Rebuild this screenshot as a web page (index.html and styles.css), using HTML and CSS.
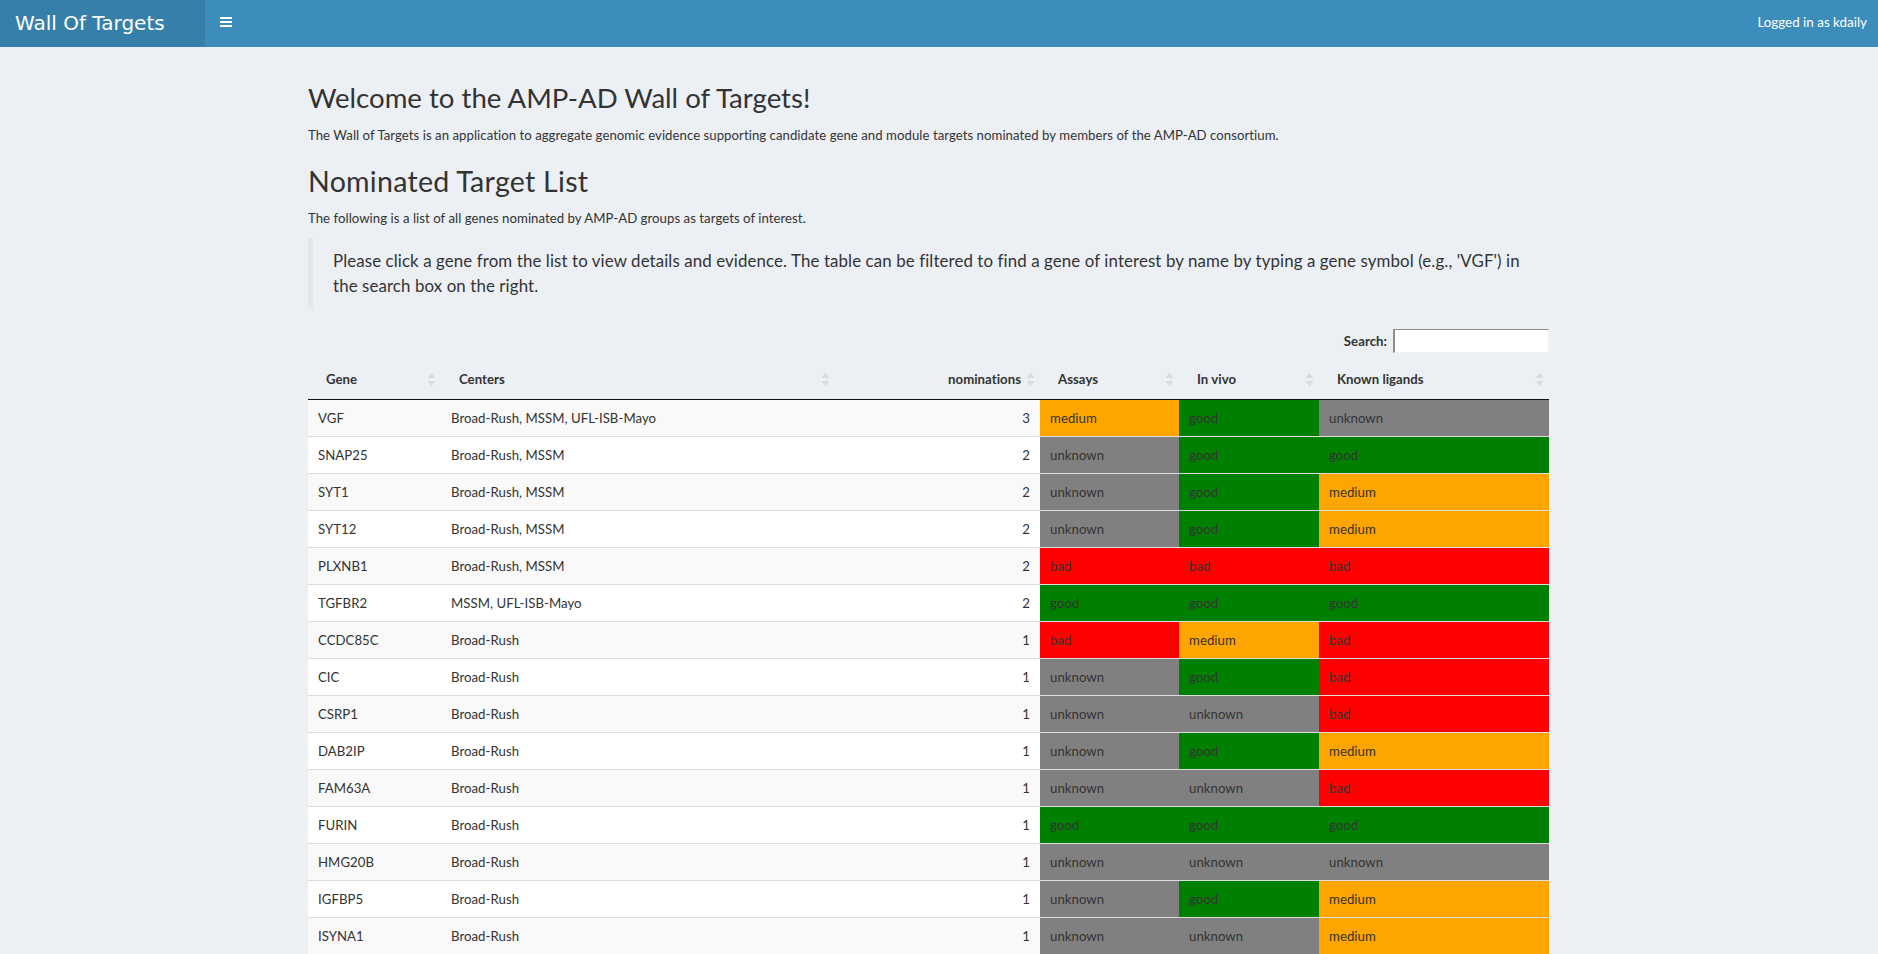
FILE: index.html
```html
<!DOCTYPE html>
<html>
<head>
<meta charset="utf-8">
<title>Wall Of Targets</title>
<link rel="stylesheet" href="styles.css">
</head>
<body>
<header class="main-header">
  <div class="logo">Wall Of Targets</div>
  <nav class="navbar">
    <span class="toggle">
      <svg width="12" height="10" viewBox="0 0 12 10"><rect x="0" y="0" width="12" height="2" fill="#fff"/><rect x="0" y="4" width="12" height="2" fill="#fff"/><rect x="0" y="8" width="12" height="2" fill="#fff"/></svg>
    </span>
    <span class="user">Logged in as kdaily</span>
  </nav>
</header>
<main class="content">
  <div class="col">
    <h1>Welcome to the AMP-AD Wall of Targets!</h1>
    <p>The Wall of Targets is an application to aggregate genomic evidence supporting candidate gene and module targets nominated by members of the AMP-AD consortium.</p>
    <h2>Nominated Target List</h2>
    <p>The following is a list of all genes nominated by AMP-AD groups as targets of interest.</p>
    <blockquote>Please click a gene from the list to view details and evidence. The table can be filtered to find a gene of interest by name by typing a gene symbol (e.g., 'VGF') in the search box on the right.</blockquote>
    <div class="filter"><label>Search:</label><input type="search" class="search"></div>
    <table class="dt">
      <colgroup><col class="c-gene"><col class="c-centers"><col class="c-nom"><col class="c-assay"><col class="c-vivo"><col class="c-lig"></colgroup>
      <thead>
        <tr>
          <th>Gene<span class="sort"><svg width="9" height="15" viewBox="0 0 9 15"><polygon points="0.5,6 4.5,1 8.5,6" fill="#dadada"/><polygon points="0.5,9 8.5,9 4.5,14" fill="#dadada"/></svg></span></th>
          <th>Centers<span class="sort"><svg width="9" height="15" viewBox="0 0 9 15"><polygon points="0.5,6 4.5,1 8.5,6" fill="#dadada"/><polygon points="0.5,9 8.5,9 4.5,14" fill="#dadada"/></svg></span></th>
          <th class="right">nominations<span class="sort"><svg width="9" height="15" viewBox="0 0 9 15"><polygon points="0.5,6 4.5,1 8.5,6" fill="#dadada"/><polygon points="0.5,9 8.5,9 4.5,14" fill="#dadada"/></svg></span></th>
          <th>Assays<span class="sort"><svg width="9" height="15" viewBox="0 0 9 15"><polygon points="0.5,6 4.5,1 8.5,6" fill="#dadada"/><polygon points="0.5,9 8.5,9 4.5,14" fill="#dadada"/></svg></span></th>
          <th>In vivo<span class="sort"><svg width="9" height="15" viewBox="0 0 9 15"><polygon points="0.5,6 4.5,1 8.5,6" fill="#dadada"/><polygon points="0.5,9 8.5,9 4.5,14" fill="#dadada"/></svg></span></th>
          <th>Known ligands<span class="sort"><svg width="9" height="15" viewBox="0 0 9 15"><polygon points="0.5,6 4.5,1 8.5,6" fill="#dadada"/><polygon points="0.5,9 8.5,9 4.5,14" fill="#dadada"/></svg></span></th>
        </tr>
      </thead>
      <tbody>
        <tr><td>VGF</td><td>Broad-Rush, MSSM, UFL-ISB-Mayo</td><td class="right">3</td><td class="medium">medium</td><td class="good">good</td><td class="unknown">unknown</td></tr>
        <tr><td>SNAP25</td><td>Broad-Rush, MSSM</td><td class="right">2</td><td class="unknown">unknown</td><td class="good">good</td><td class="good">good</td></tr>
        <tr><td>SYT1</td><td>Broad-Rush, MSSM</td><td class="right">2</td><td class="unknown">unknown</td><td class="good">good</td><td class="medium">medium</td></tr>
        <tr><td>SYT12</td><td>Broad-Rush, MSSM</td><td class="right">2</td><td class="unknown">unknown</td><td class="good">good</td><td class="medium">medium</td></tr>
        <tr><td>PLXNB1</td><td>Broad-Rush, MSSM</td><td class="right">2</td><td class="bad">bad</td><td class="bad">bad</td><td class="bad">bad</td></tr>
        <tr><td>TGFBR2</td><td>MSSM, UFL-ISB-Mayo</td><td class="right">2</td><td class="good">good</td><td class="good">good</td><td class="good">good</td></tr>
        <tr><td>CCDC85C</td><td>Broad-Rush</td><td class="right">1</td><td class="bad">bad</td><td class="medium">medium</td><td class="bad">bad</td></tr>
        <tr><td>CIC</td><td>Broad-Rush</td><td class="right">1</td><td class="unknown">unknown</td><td class="good">good</td><td class="bad">bad</td></tr>
        <tr><td>CSRP1</td><td>Broad-Rush</td><td class="right">1</td><td class="unknown">unknown</td><td class="unknown">unknown</td><td class="bad">bad</td></tr>
        <tr><td>DAB2IP</td><td>Broad-Rush</td><td class="right">1</td><td class="unknown">unknown</td><td class="good">good</td><td class="medium">medium</td></tr>
        <tr><td>FAM63A</td><td>Broad-Rush</td><td class="right">1</td><td class="unknown">unknown</td><td class="unknown">unknown</td><td class="bad">bad</td></tr>
        <tr><td>FURIN</td><td>Broad-Rush</td><td class="right">1</td><td class="good">good</td><td class="good">good</td><td class="good">good</td></tr>
        <tr><td>HMG20B</td><td>Broad-Rush</td><td class="right">1</td><td class="unknown">unknown</td><td class="unknown">unknown</td><td class="unknown">unknown</td></tr>
        <tr><td>IGFBP5</td><td>Broad-Rush</td><td class="right">1</td><td class="unknown">unknown</td><td class="good">good</td><td class="medium">medium</td></tr>
        <tr><td>ISYNA1</td><td>Broad-Rush</td><td class="right">1</td><td class="unknown">unknown</td><td class="unknown">unknown</td><td class="medium">medium</td></tr>
      </tbody>
    </table>
  </div>
</main>
</body>
</html>
```
FILE: styles.css
```css
html, body {
  margin: 0;
  padding: 0;
  height: 100%;
  overflow: hidden;
}
body {
  background: #ecf0f5;
  color: #333;
  font-family: Lato, "Noto Sans", sans-serif;
  font-size: 13.2px;
  letter-spacing: 0.04px;
  line-height: 20px;
}
.main-header {
  display: flex;
  height: 47px;
}
.logo {
  width: 190px;
  padding-left: 15px;
  background: #367fa9;
  color: #fff;
  font-family: "DejaVu Sans", sans-serif;
  font-size: 20px;
  letter-spacing: 0;
  line-height: 47px;
}
.navbar {
  flex: 1;
  background: #3c8dbc;
  display: flex;
  align-items: center;
  justify-content: space-between;
  color: #fff;
}
.toggle {
  display: flex;
  margin-left: 15px;
  margin-top: -4px;
}
.user {
  margin-right: 11px;
  margin-top: -3px;
  font-size: 13.4px;
  letter-spacing: 0;
}
.content {
  padding: 0 0 0 308px;
}
.col {
  width: 1241px;
}
h1 {
  font-size: 27.6px;
  font-weight: 400;
  letter-spacing: 0;
  line-height: 40px;
  margin: 31px 0 7px;
}
h2 {
  font-size: 28.6px;
  font-weight: 400;
  letter-spacing: 0.25px;
  line-height: 33px;
  margin: 20px 0 10px;
}
p {
  margin: 0 0 10px;
}
blockquote {
  margin: 0 0 20px;
  padding: 10px 20px;
  border-left: 5px solid #e6e6e6;
  font-size: 16.85px;
  letter-spacing: 0.11px;
  line-height: 25px;
}
.filter {
  display: flex;
  justify-content: flex-end;
  height: 31px;
  align-items: flex-start;
}
.filter label {
  font-weight: 700;
  margin-right: 6px;
  line-height: 26px;
}
.search {
  box-sizing: border-box;
  width: 156px;
  height: 24px;
  margin: 1px 0 0;
  padding: 0 4px;
  background: #fff;
  border-top: 1px solid #8e8e8e;
  border-left: 2px solid #8e8e8e;
  border-right: 1px solid #f0f0f0;
  border-bottom: 1px solid #f0f0f0;
  outline: none;
}
.dt {
  width: 1241px;
  table-layout: fixed;
  border-collapse: collapse;
  border-spacing: 0;
}
.c-gene { width: 133px; }
.c-centers { width: 394px; }
.c-nom { width: 205px; }
.c-assay { width: 139px; }
.c-vivo { width: 140px; }
.c-lig { width: 230px; }
.dt th {
  position: relative;
  text-align: left;
  font-weight: 700;
  padding: 10px 18px;
  line-height: 20px;
  border-bottom: 1px solid #111;
}
.dt th.right {
  text-align: right;
  padding-right: 19px;
}
.sort {
  position: absolute;
  right: 5px;
  top: 13px;
  display: flex;
}
.dt td {
  padding: 8px 10px;
  line-height: 20px;
  border-top: 1px solid #ddd;
  white-space: nowrap;
  overflow: hidden;
}
.dt tbody tr:first-child td {
  border-top: none;
}
.dt tbody tr:nth-child(odd) {
  background: #f9f9f9;
}
.dt tbody tr:nth-child(even) {
  background: #fff;
}
.dt td.right {
  text-align: right;
}
.dt td.medium { background: #ffa500; }
.dt td.good { background: #008000; }
.dt td.bad { background: #ff0000; }
.dt td.unknown { background: #808080; }
```
